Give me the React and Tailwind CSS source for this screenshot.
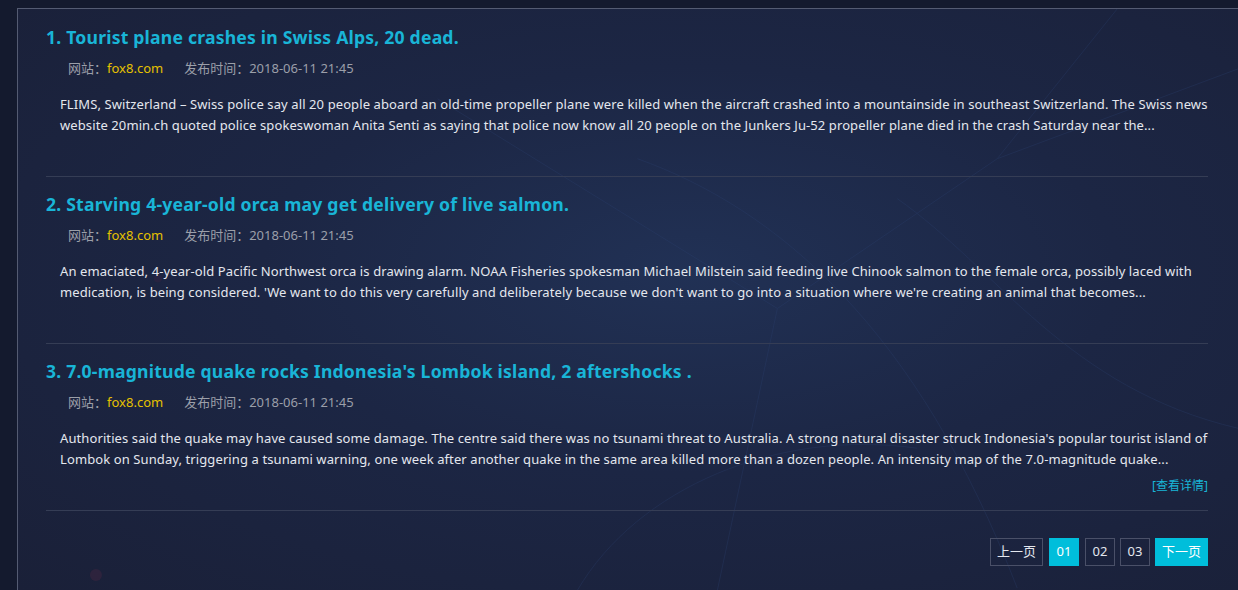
const news = [
  {
    title: "1. Tourist plane crashes in Swiss Alps, 20 dead.",
    site: "fox8.com",
    time: "2018-06-11 21:45",
    desc: "FLIMS, Switzerland – Swiss police say all 20 people aboard an old-time propeller plane were killed when the aircraft crashed into a mountainside in southeast Switzerland. The Swiss news website 20min.ch quoted police spokeswoman Anita Senti as saying that police now know all 20 people on the Junkers Ju-52 propeller plane died in the crash Saturday near the...",
    more: false,
  },
  {
    title: "2. Starving 4-year-old orca may get delivery of live salmon.",
    site: "fox8.com",
    time: "2018-06-11 21:45",
    desc: "An emaciated, 4-year-old Pacific Northwest orca is drawing alarm. NOAA Fisheries spokesman Michael Milstein said feeding live Chinook salmon to the female orca, possibly laced with medication, is being considered. 'We want to do this very carefully and deliberately because we don't want to go into a situation where we're creating an animal that becomes...",
    more: false,
  },
  {
    title: "3. 7.0-magnitude quake rocks Indonesia's Lombok island, 2 aftershocks .",
    site: "fox8.com",
    time: "2018-06-11 21:45",
    desc: "Authorities said the quake may have caused some damage. The centre said there was no tsunami threat to Australia. A strong natural disaster struck Indonesia's popular tourist island of Lombok on Sunday, triggering a tsunami warning, one week after another quake in the same area killed more than a dozen people. An intensity map of the 7.0-magnitude quake...",
    more: true,
  },
];

function NewsItem({ item }) {
  return (
    <div className="border-b border-[#353d55] pt-[15px] pb-[16px] first:pt-0">
      <h3 className="text-[17.6px] leading-[24px] font-bold tracking-[0.2px] text-[#19b5d7]">
        {item.title}
      </h3>
      <div className="mt-[9px] flex pl-[22px] text-[13px] leading-[20px] text-[#9b9fa9]">
        <span>
          网站：<span className="text-[#e5c100]">{item.site}</span>
        </span>
        <span className="ml-[21px]">发布时间：{item.time}</span>
      </div>
      <p className="mt-[16px] pl-[14px] text-[13px] leading-[21px] tracking-[0.1px] text-[#e4e7ee]">
        {item.desc}
      </p>
      <div
        className={`mt-[8px] text-right text-[12px] leading-[16px] text-[#19b5d7] ${item.more ? "" : "invisible"}`}
      >
        [查看详情]
      </div>
    </div>
  );
}

export default function App() {
  return (
    <div
      className="relative h-[590px] w-full overflow-hidden bg-[#141a2e] pt-[8px] pl-[17px]"
      style={{ fontFamily: '"Noto Sans", "Noto Sans CJK SC", sans-serif' }}
    >
      <div className="relative h-full border-t border-l border-[#545b72] bg-[radial-gradient(ellipse_at_55%_45%,#213155_0%,#1c2644_45%,#1a2038_100%)] pt-[16px] pr-[30px] pl-[28px]">
        <svg
          className="pointer-events-none absolute inset-0 h-full w-full"
          viewBox="0 0 1221 582"
          preserveAspectRatio="none"
        >
          <g fill="none" stroke="#2c4170" strokeWidth="1" opacity="0.3">
            <path d="M620 150 C 760 200, 900 320, 1000 580" />
            <path d="M420 90 L 760 300 L 980 150 L 1221 60" />
            <path d="M760 300 L 700 582" />
            <path d="M880 190 C 980 260, 1050 380, 1221 420" />
            <path d="M560 582 C 620 480, 760 420, 900 440" />
            <path d="M980 150 L 1100 0" />
          </g>
          <circle cx="78" cy="567" r="6" fill="#3a2440" opacity="0.6" />
          <circle cx="140" cy="270" r="4" fill="#3a2440" opacity="0.4" />
        </svg>
        <div className="relative">
          {news.map((item) => (
            <NewsItem key={item.title} item={item} />
          ))}
          <div className="mt-[27px] flex justify-end text-[13px]">
            <button className="h-[28px] w-[53px] border border-[#4a5068] text-[#e4e7ee]">
              上一页
            </button>
            <button className="ml-[6px] h-[28px] w-[30px] bg-[#00bedb] text-white">01</button>
            <button className="ml-[6px] h-[28px] w-[30px] border border-[#4a5068] text-[#e4e7ee]">
              02
            </button>
            <button className="ml-[5px] h-[28px] w-[30px] border border-[#4a5068] text-[#e4e7ee]">
              03
            </button>
            <button className="ml-[5px] h-[28px] w-[53px] bg-[#00bedb] text-white">
              下一页
            </button>
          </div>
        </div>
      </div>
    </div>
  );
}
